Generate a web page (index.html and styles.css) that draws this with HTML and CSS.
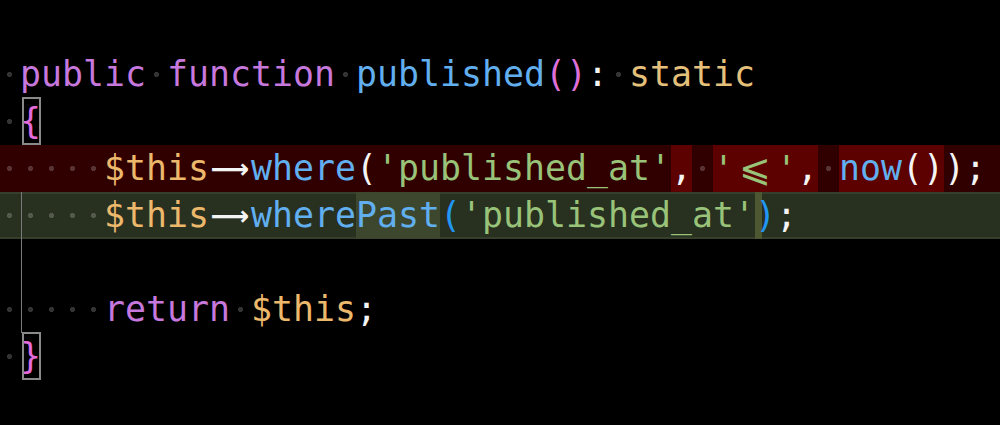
FILE: index.html
```html
<!DOCTYPE html>
<html>
<head>
<meta charset="utf-8">
<link rel="stylesheet" href="styles.css">
</head>
<body>
<div class="editor">
  <div class="line"><span class="ws"> </span><span class="kw">public</span><span class="ws"> </span><span class="kw">function</span><span class="ws"> </span><span class="fn">published</span><span class="br1">()</span><span class="pl">:</span><span class="ws"> </span><span class="ty">static</span></div>
  <div class="line"><span class="ws"> </span><span class="brace">{</span></div>
  <div class="line del"><span class="ws"> </span><span class="ws"> </span><span class="ws"> </span><span class="ws"> </span><span class="ws"> </span><span class="var">$this</span><span class="arrow">⟶</span><span class="fn">where</span><span class="pl">(</span><span class="str">'published_at'</span><span class="hl-del"><span class="pl">,</span></span><span class="ws"> </span><span class="hl-del"><span class="str">'<span class="le">⩽</span>'</span><span class="pl">,</span></span><span class="ws"> </span><span class="hl-del"><span class="fn">now</span><span class="pl">()</span></span><span class="pl">);</span></div>
  <div class="line add"><span class="ws"> </span><span class="ws guide"> </span><span class="ws"> </span><span class="ws"> </span><span class="ws"> </span><span class="var">$this</span><span class="arrow">⟶</span><span class="fn">where</span><span class="hl-add fn">Past</span><span class="br3">(</span><span class="str">'published_at'</span><span class="br3 caret">)</span><span class="pl">;</span></div>
  <div class="line"><span class="gap"></span><span class="gap guide"></span></div>
  <div class="line"><span class="ws"> </span><span class="ws guide"> </span><span class="ws"> </span><span class="ws"> </span><span class="ws"> </span><span class="kw">return</span><span class="ws"> </span><span class="var">$this</span><span class="pl">;</span></div>
  <div class="line"><span class="ws"> </span><span class="brace">}</span></div>
</div>
</body>
</html>
```

FILE: styles.css
```css
html, body {
  margin: 0;
  padding: 0;
  background: #000;
  width: 1000px;
  height: 425px;
  overflow: hidden;
}

.editor {
  padding-top: 51px;
  margin-left: -1px;
  font-family: "DejaVu Sans Mono", "Liberation Mono", monospace;
  font-size: 34.88px;
  color: #f2f2f2;
}

.line {
  height: 47px;
  line-height: 47px;
  white-space: pre;
  display: flex;
  align-items: stretch;
  position: relative;
}

.line > span {
  display: inline-block;
  height: 47px;
}

.ws, .gap {
  width: 21px;
  background-image: radial-gradient(circle at center, rgba(255,255,255,0.2) 0 2.3px, transparent 2.9px);
  background-repeat: no-repeat;
}

.gap {
  background-image: none;
}

.guide {
  background-image:
    linear-gradient(to right, transparent 0 1px, #7a7a7a 1px 2.5px, transparent 2.5px),
    radial-gradient(circle at center, rgba(255,255,255,0.2) 0 2.3px, transparent 2.9px);
}

.gap.guide {
  background-image: linear-gradient(to right, transparent 0 1px, #7a7a7a 1px 2.5px, transparent 2.5px);
}

.kw { color: #c678dd; }
.fn { color: #61afef; }
.br1 { color: #de6fd8; }
.br3 { color: #2196f3; }
.pl { color: #f4f4f4; }
.ty { color: #e5c07b; }
.var { color: #ebb86c; }
.str { color: #98c379; }

.arrow {
  width: 42px;
  overflow: hidden;
  text-align: center;
  color: #f4f4f4;
  font-family: "DejaVu Sans", sans-serif;
  font-weight: bold;
  font-size: 27px;
}

.le {
  display: inline-block;
  width: 42px;
  text-align: center;
  font-family: "DejaVu Sans", sans-serif;
  font-size: 38px;
}

.brace {
  position: relative;
  width: 21px;
  color: #e46bdc;
}

.brace::after {
  content: "";
  position: absolute;
  left: 2px;
  right: 0;
  top: -1px;
  bottom: 0;
  border: 2px solid #8a8a8a;
}

.del {
  background: #300000;
}

.hl-del {
  background: #5c0000;
  display: inline-flex !important;
}

.hl-del > span { display: inline-block; }

.add {
  background: #283020;
  box-shadow: inset 0 2px 0 #363f2b, inset 0 -2px 0 #363f2b;
}

.hl-add {
  background: #3c472d;
}

.caret {
  background: linear-gradient(to right, #4d5832 0 7px, transparent 7px);
}
```
